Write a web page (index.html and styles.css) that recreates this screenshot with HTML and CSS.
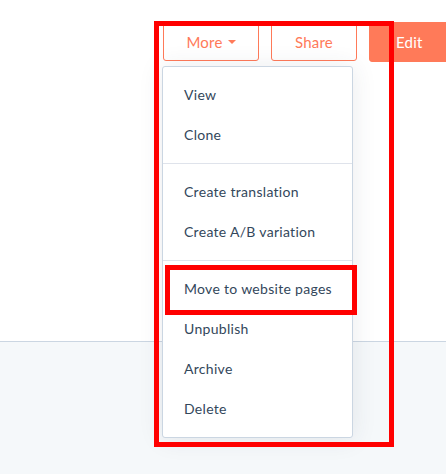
FILE: index.html
```html
<!DOCTYPE html>
<html lang="en">
<head>
<meta charset="UTF-8">
<meta name="viewport" content="width=device-width, initial-scale=1.0">
<link rel="stylesheet" href="styles.css">
</head>
<body>

<div id="page">
  <div id="top">
    <div class="actions">
      <button class="btn btn-more">More <span class="caret"></span></button>
      <button class="btn btn-share">Share</button>
      <button class="btn btn-edit">Edit</button>
    </div>

    <ul class="dropdown">
      <li>View</li>
      <li>Clone</li>
      <li class="divider"></li>
      <li>Create translation</li>
      <li>Create A/B variation</li>
      <li class="divider"></li>
      <li>Move to website pages</li>
      <li>Unpublish</li>
      <li>Archive</li>
      <li>Delete</li>
    </ul>
  </div>
  <div id="bottom"></div>

  <!-- annotation boxes drawn over the screenshot -->
  <div class="mark mark-menu"></div>
  <div class="mark mark-item"></div>
</div>

</body>
</html>
```

FILE: styles.css
```css
body {
  margin: 0;
  overflow: hidden;
  font-family: Lato, "Open Sans", sans-serif;
}

#page {
  position: relative;
  width: 446px;
  height: 474px;
  overflow: hidden;
}

#top {
  height: 341px;
  background-color: #fff;
  border-bottom: 1px solid #cbd6e2;
}

#bottom {
  height: 132px;
  background-color: #f5f8fa;
}

.actions {
  display: flex;
  align-items: flex-start;
  gap: 12px;
  padding: 22px 0 0 163px;
}

.btn {
  flex: none;
  box-sizing: border-box;
  height: 39px;
  padding: 0;
  border: 1px solid #ff7a59;
  border-radius: 3px;
  background-color: #fff;
  color: #ff7a59;
  font-family: inherit;
  font-size: 15px;
  letter-spacing: 0.2px;
  display: flex;
  align-items: center;
  justify-content: center;
}

.btn-more {
  width: 96px;
}

.btn-share {
  width: 86px;
}

.btn-edit {
  width: 92px;
  height: 40px;
  background-color: #ff7a59;
  color: #fff;
  justify-content: flex-start;
  padding-left: 26px;
}

.caret {
  display: inline-block;
  margin-left: 5px;
  width: 0;
  height: 0;
  border-left: 4px solid transparent;
  border-right: 4px solid transparent;
  border-top: 4px solid #ff7a59;
}

.dropdown {
  position: absolute;
  top: 66px;
  left: 162px;
  width: 189px;
  margin: 0;
  padding: 8px 0;
  list-style: none;
  background-color: #fff;
  border: 1px solid #cbd6e2;
  border-radius: 3px;
  box-shadow: 0 1px 24px 0 rgba(45, 62, 80, 0.1);
}

.dropdown li {
  height: 40px;
  line-height: 40px;
  padding-left: 21px;
  font-size: 14px;
  letter-spacing: 0.3px;
  color: #33475b;
}

.dropdown li.divider {
  height: 1px;
  margin: 8px 0;
  padding: 0;
  background-color: #dfe3eb;
}

.mark {
  position: absolute;
  box-sizing: border-box;
  border: 5px solid #ff0000;
}

.mark-menu {
  top: 21px;
  left: 154px;
  width: 240px;
  height: 426px;
}

.mark-item {
  top: 265px;
  left: 165px;
  width: 192px;
  height: 50px;
}
```
